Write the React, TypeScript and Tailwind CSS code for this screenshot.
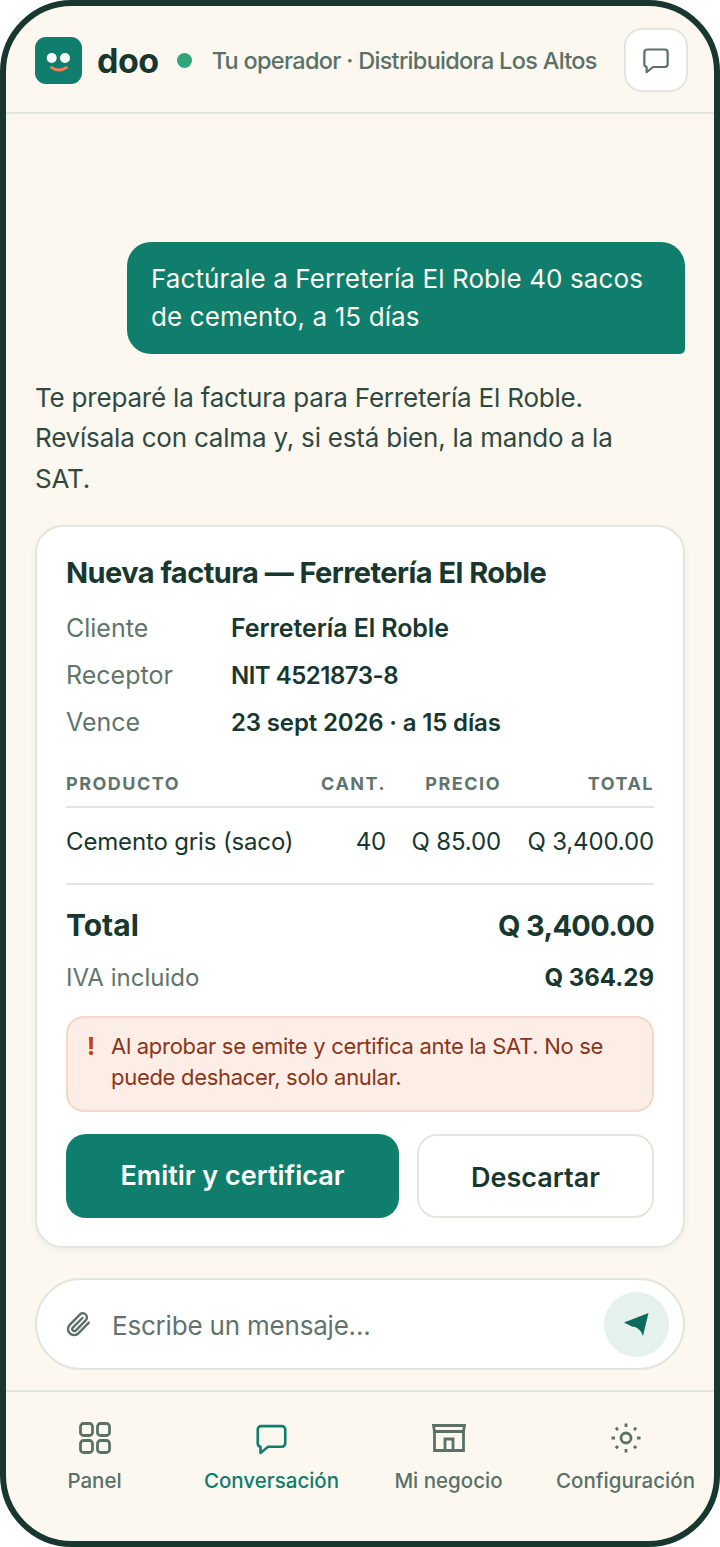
import React from "react";

const ink = "text-[#17372f]";

function ChatIcon({ className }: { className: string }) {
  return (
    <svg viewBox="0 0 24 24" fill="none" stroke="currentColor" strokeWidth="1.9" strokeLinejoin="round" className={className}>
      <path d="M4.5 3h15A2.5 2.5 0 0 1 22 5.500v10a2.500 2.500 0 0 1-2.500 2.500H9.500L4 22.500V18.000A2.500 2.500 0 0 1 2 15.500v-10A2.500 2.500 0 0 1 4.500 3z" />
    </svg>
  );
}

function NavItem({ label, active, children }: { label: string; active?: boolean; children: React.ReactNode }) {
  return (
    <div className={`flex flex-col items-center gap-[14px] ${active ? "text-[#107e6c]" : "text-[#5a7168]"}`}>
      <div className="h-[34px] flex items-center justify-center">{children}</div>
      <span className="text-[20.500px] leading-[24px] font-medium whitespace-nowrap">{label}</span>
    </div>
  );
}

function InfoRow({ label, value, valueClass }: { label: string; value: string; valueClass: string }) {
  return (
    <div className="flex items-center h-[47px]">
      <span className="w-[165px] text-[25px] text-[#5f756c]">{label}</span>
      <span className={`font-semibold ${valueClass} ${ink}`}>{value}</span>
    </div>
  );
}

export default function App() {
  return (
    <div className="w-[720px] h-[1547px] bg-white font-['Inter',sans-serif]">
      <div className="w-full h-full bg-[#fcf8f0] border-[6px] border-[#17372f] rounded-[72px] overflow-hidden flex flex-col">
        {/* header */}
        <div className="h-[108px] shrink-0 border-b-2 border-[#e3e6de] flex items-center pt-[2px] pl-[29px] pr-[26px]">
          <div className="w-[47px] h-[47px] rounded-[11px] bg-[#107e6c] flex items-center justify-center">
            <svg viewBox="0 0 47 47" className="w-[47px] h-[47px]">
              <circle cx="16.700" cy="21" r="5" fill="#fff" />
              <circle cx="30" cy="21" r="5" fill="#fff" />
              <path d="M16.500 30.500q7.500 5 15 0" fill="none" stroke="#f0814e" strokeWidth="2.800" strokeLinecap="round" />
            </svg>
          </div>
          <span className={`ml-[15px] pt-[1px] text-[34px] font-bold tracking-[-0.5px] ${ink}`}>doo</span>
          <span className="ml-[18px] w-[15px] h-[15px] rounded-full bg-[#2fa67c]" />
          <span className="ml-[20px] pt-[1px] text-[23.500px] font-medium text-[#5a7168] tracking-[-0.7px] whitespace-nowrap">Tu operador · Distribuidora Los Altos</span>
          <div className="ml-auto w-[64px] h-[64px] rounded-[18px] bg-white border-2 border-[#e3e6de] flex items-center justify-center text-[#5a7168]">
            <ChatIcon className="w-[28px] h-[28px]" />
          </div>
        </div>

        {/* chat */}
        <div className="flex-1 flex flex-col px-[29px] pt-[128px] min-h-0">
          <div className="self-end w-[558px] h-[112px] bg-[#107e6c] rounded-[24px] rounded-br-[5px] pl-[24px] pt-[18px] text-[26px] leading-[38px] tracking-[0.1px] text-[#fdf8f1]">
            Factúrale a Ferretería El Roble 40 sacos<br />de cemento, a 15 días
          </div>
          <p className={`mt-[23.600px] text-[26px] leading-[40.500px] tracking-[-0.2px] ${ink} opacity-90`}>
            Te preparé la factura para Ferretería El Roble.<br />Revísala con calma y, si está bien, la mando a la<br />SAT.
          </p>

          {/* invoice card */}
          <div className="mt-[26.400px] w-[650px] h-[723px] bg-white border-2 border-[#e3e6de] rounded-[28px] shadow-[0_2px_6px_rgba(23,55,47,0.06)] px-[29px] pt-[27px]">
            <h2 className={`text-[29px] leading-[38px] font-bold tracking-[-0.55px] ${ink}`}>Nueva factura — Ferretería El Roble</h2>
            <div className="mt-[13px]">
              <InfoRow label="Cliente" value="Ferretería El Roble" valueClass="text-[25px] tracking-[-0.1px]" />
              <InfoRow label="Receptor" value="NIT 4521873-8" valueClass="text-[24px] tracking-[-0.5px]" />
              <InfoRow label="Vence" value="23 sept 2026 · a 15 días" valueClass="text-[24px] tracking-[-0.15px]" />
            </div>
            <div className="mt-[25px] flex items-center h-[37px] border-b-2 border-[#e3e6de] pb-[11px] text-[18px] font-bold tracking-[1.5px] text-[#5f756c]">
              <span className="flex-1">PRODUCTO</span>
              <span className="w-[80px] text-right">CANT.</span>
              <span className="w-[115px] text-right">PRECIO</span>
              <span className="w-[153px] text-right">TOTAL</span>
            </div>
            <div className={`flex items-center h-[77px] border-b-2 border-[#e3e6de] pb-[7px] text-[24px] tracking-[-0.15px] ${ink}`}>
              <span className="flex-1">Cemento gris (saco)</span>
              <span className="w-[80px] text-right">40</span>
              <span className="w-[115px] text-right">Q 85.00</span>
              <span className="w-[153px] text-right">Q 3,400.00</span>
            </div>
            <div className={`mt-[17px] flex justify-between items-center h-[46px] font-bold ${ink}`}>
              <span className="text-[30px]">Total</span>
              <span className="text-[29px] tracking-[-0.7px]">Q 3,400.00</span>
            </div>
            <div className="mt-[10px] flex justify-between items-center h-[40px] text-[24px] text-[#5f756c]">
              <span>IVA incluido</span>
              <span className={`font-bold ${ink}`}>Q 364.29</span>
            </div>
            <div className="mt-[18px] h-[96px] bg-[#fceee6] border-2 border-[#f6d7c9] rounded-[18px] flex pl-[19px] pt-[13px] text-[22px] leading-[31px] tracking-[-0.3px] text-[#8b3417]">
              <span className="w-[24px] font-bold text-[24px] text-[#c2410c]">!</span>
              <span className="whitespace-nowrap">Al aprobar se emite y certifica ante la SAT. No se<br />puede deshacer, solo anular.</span>
            </div>
            <div className="mt-[22px] flex gap-[18px]">
              <div className="w-[333px] h-[84px] rounded-[20px] bg-[#107e6c] text-white text-[27px] font-semibold flex items-center justify-center">Emitir y certificar</div>
              <div className={`w-[237px] h-[84px] rounded-[20px] bg-white border-2 border-[#e3e6de] text-[27px] font-semibold flex items-center justify-center pt-[3px] ${ink}`}>Descartar</div>
            </div>
          </div>

          {/* composer */}
          <div className="mt-[30px] w-[650px] h-[92px] bg-white border-2 border-[#e3e6de] rounded-full flex items-center pl-[27px] pr-[14px]">
            <svg viewBox="0 0 24 24" fill="none" stroke="#5a7168" strokeWidth="2" strokeLinecap="round" strokeLinejoin="round" className="w-[29px] h-[29px]">
              <path d="M20.500 10.500l-8.600 8.800a5 5 0 0 1-7.200-7L13.300 3.600a3.400 3.400 0 0 1 4.800 4.800L9.700 17a1.700 1.700 0 0 1-2.400-2.400l7.900-8" />
            </svg>
            <span className="ml-[19px] pt-[2px] text-[26px] tracking-[-0.2px] text-[#5f756c]">Escribe un mensaje...</span>
            <div className="ml-auto w-[65px] h-[65px] rounded-full bg-[#e5f1ed] flex items-center justify-center">
              <svg viewBox="0 0 25 23" className="w-[25px] h-[23px]">
                <path d="M0 9.500 24.500 0 19 23 Q16 14 8 13.500 Q4 11.500 0 9.500z" fill="#0d6b5b" />
              </svg>
            </div>
          </div>
        </div>

        {/* bottom nav */}
        <div className="h-[151px] shrink-0 border-t-2 border-[#e3e6de] grid grid-cols-4 pt-[29px]">
          <NavItem label="Panel">
            <svg viewBox="0 0 32 32" fill="none" stroke="currentColor" strokeWidth="2.800" className="w-[32px] h-[32px]">
              <rect x="1.500" y="1.500" width="12" height="12" rx="3" />
              <rect x="18.500" y="1.500" width="12" height="12" rx="3" />
              <rect x="1.500" y="18.500" width="12" height="12" rx="3" />
              <rect x="18.500" y="18.500" width="12" height="12" rx="3" />
            </svg>
          </NavItem>
          <NavItem label="Conversación" active>
            <ChatIcon className="w-[33px] h-[33px]" />
          </NavItem>
          <NavItem label="Mi negocio">
            <svg viewBox="0 0 34 28" fill="none" stroke="currentColor" strokeWidth="2.800" className="w-[34px] h-[28px]">
              <path d="M1.500 1.500h31l-1 6h-29z" />
              <path d="M2.500 7.500v19h29v-19" />
              <path d="M13 26.500V15h8v11.500" />
            </svg>
          </NavItem>
          <NavItem label="Configuración">
            <svg viewBox="0 0 32 32" fill="none" stroke="currentColor" strokeWidth="2.800" className="w-[32px] h-[32px]">
              <circle cx="16" cy="16" r="5" />
              <path d="M16 1.500v3.500M16 27v3.500M1.500 16h3.500M27 16h3.500M5.800 5.800l2.200 2.200M24 24l2.200 2.200M5.800 26.200l2.200-2.200M24 8l2.200-2.200" />
            </svg>
          </NavItem>
        </div>
      </div>
    </div>
  );
}
